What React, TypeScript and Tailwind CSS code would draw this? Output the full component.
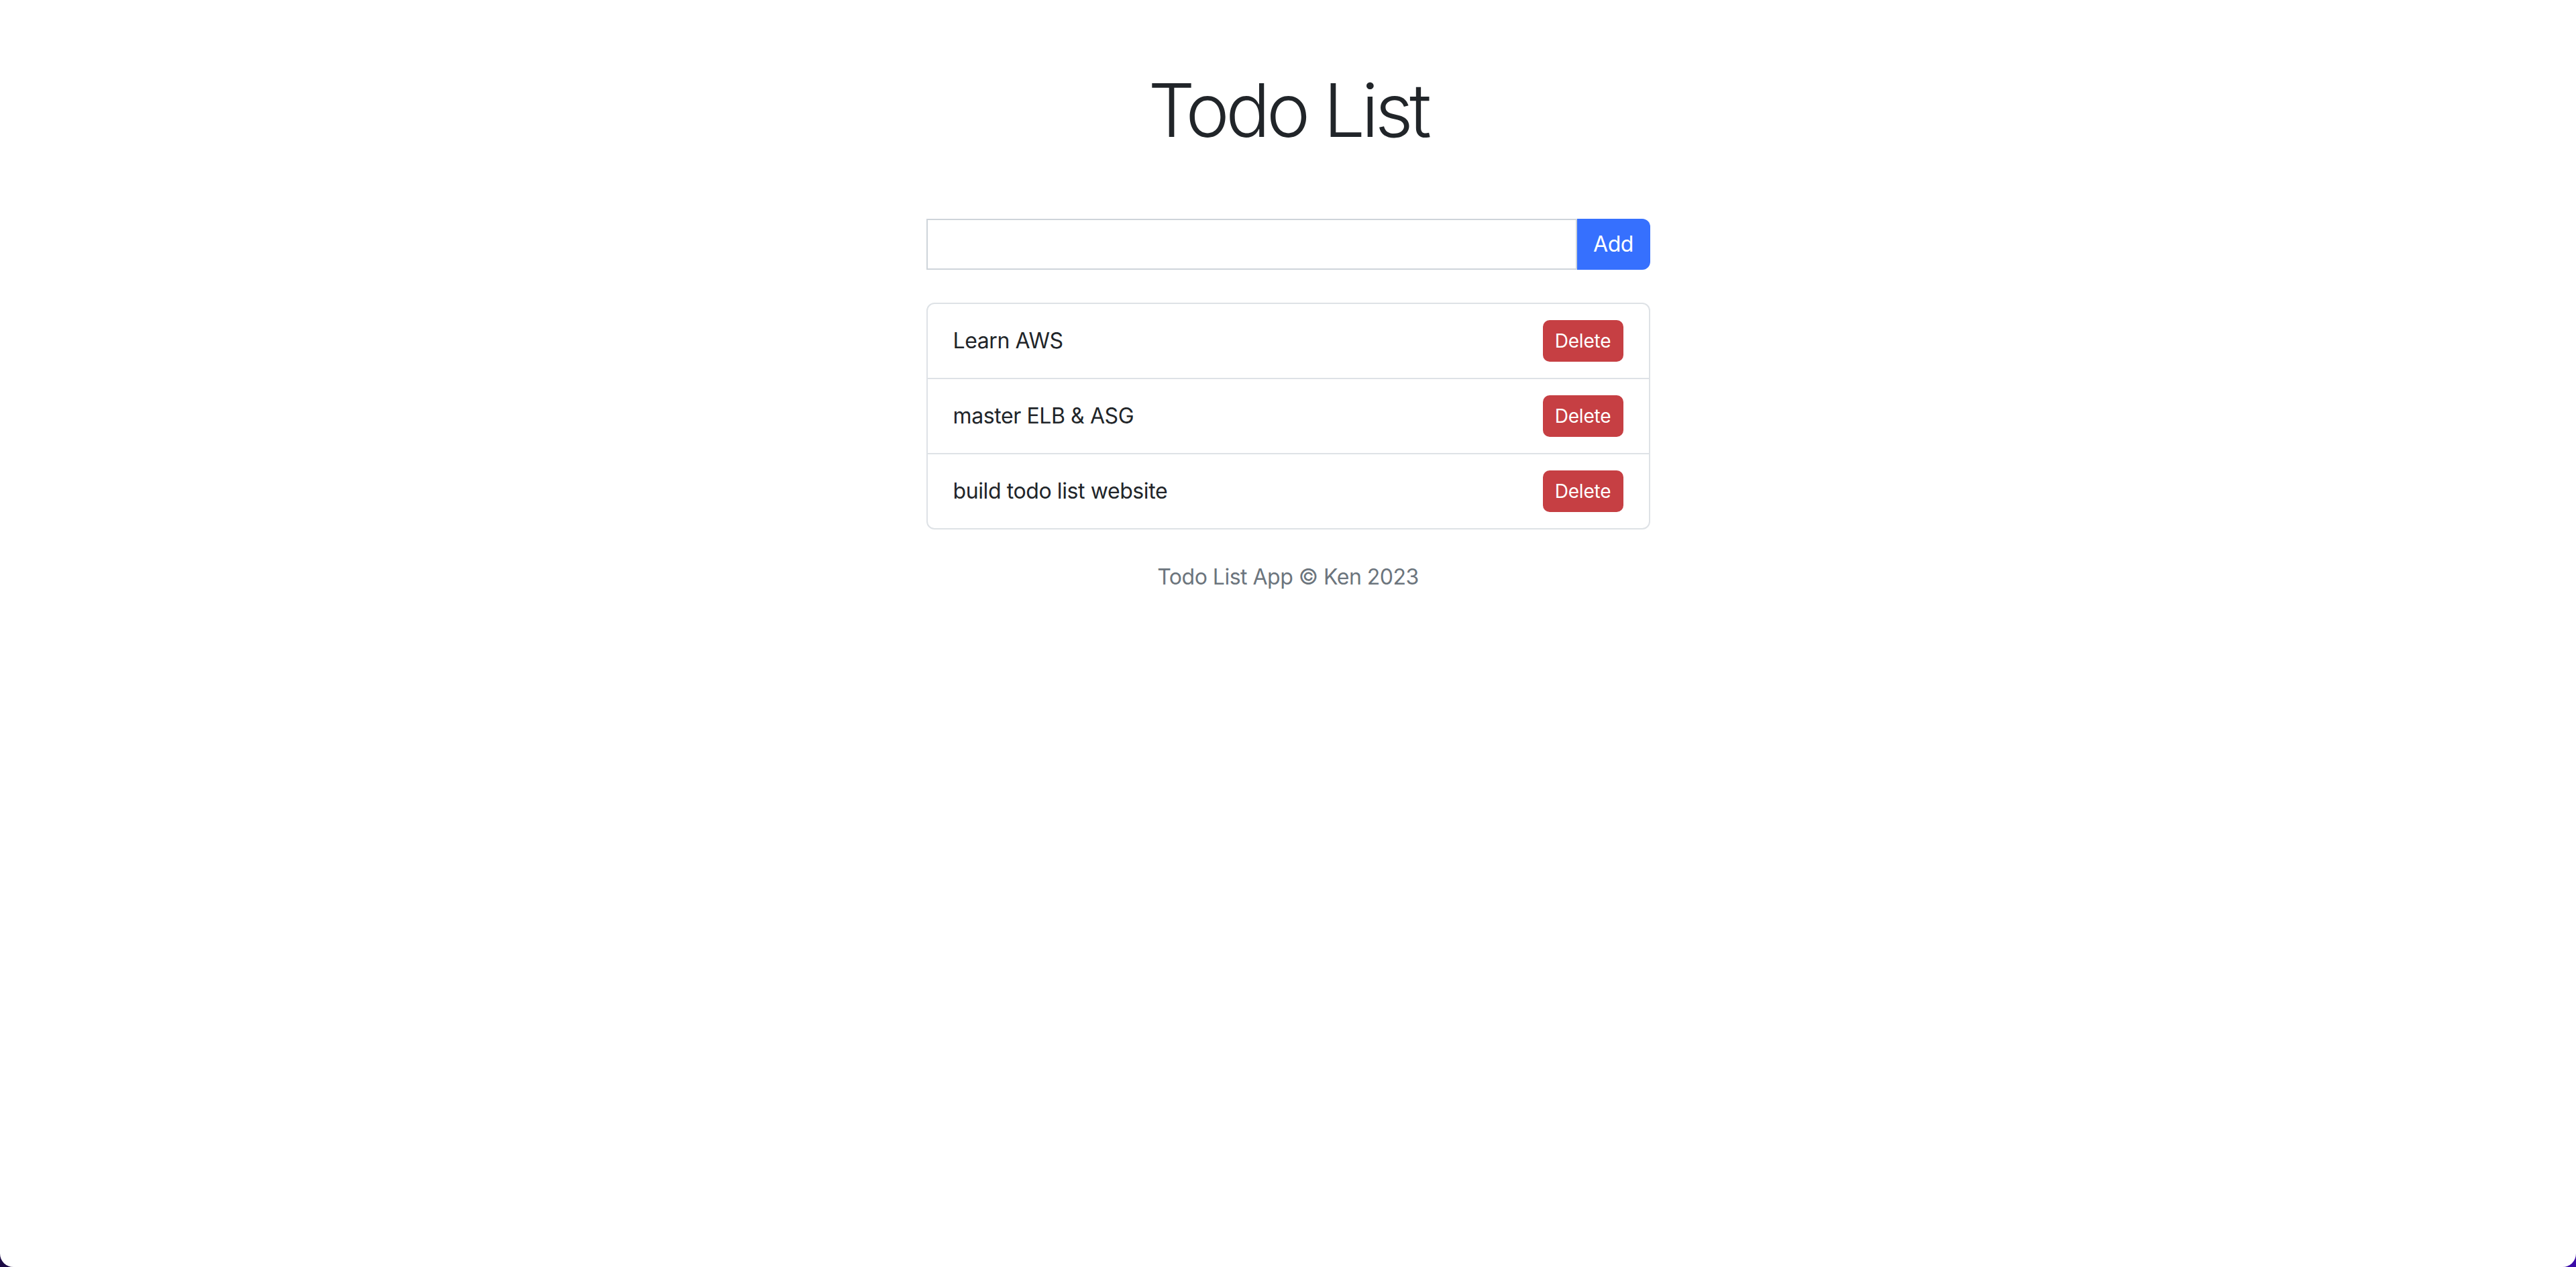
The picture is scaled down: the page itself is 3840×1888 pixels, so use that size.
import React from "react";

const todos = ["Learn AWS", "master ELB & ASG", "build todo list website"];

export default function App() {
  return (
    <div
      className="h-screen w-full bg-gradient-to-r from-[#1c0b45] to-[#3a0ca8]"
      style={{ fontFamily: "Inter, 'Noto Sans', 'Liberation Sans', sans-serif" }}
    >
      <div className="flex h-full w-full flex-col items-center rounded-b-[20px] bg-white pt-[97px]">
        <h1 className="text-[110px] font-light leading-[134px] tracking-[-5.5px] text-[#212529]">
          Todo List
        </h1>
        <div className="mt-[95px] flex h-[76px] w-[1079px]">
          <input
            type="text"
            className="h-full flex-1 border-2 border-[#ced4da] bg-white px-6 text-[32px] outline-none"
          />
          <button className="h-full w-[109px] rounded-r-[12px] bg-[#3670fe] text-[32px] tracking-[-0.4px] text-white">
            Add
          </button>
        </div>
        <ul className="mt-[49px] w-[1079px] rounded-[12px] border-2 border-[#dee2e6]">
          {todos.map((t, i) => (
            <li
              key={t}
              className={`flex h-[110px] items-center justify-between px-[38px] ${
                i > 0 ? "h-[112px] border-t-2 border-[#dee2e6]" : ""
              }`}
            >
              <span className="text-[32px] tracking-[-0.4px] text-[#212529]">{t}</span>
              <button className="h-[62px] w-[120px] rounded-[10px] bg-[#c63f43] text-[28px] tracking-[-0.2px] text-white">
                Delete
              </button>
            </li>
          ))}
        </ul>
        <p className="mt-[47px] text-[32px] leading-[48px] tracking-[-0.5px] text-[#6c757d]">
          Todo List App © Ken 2023
        </p>
      </div>
    </div>
  );
}
